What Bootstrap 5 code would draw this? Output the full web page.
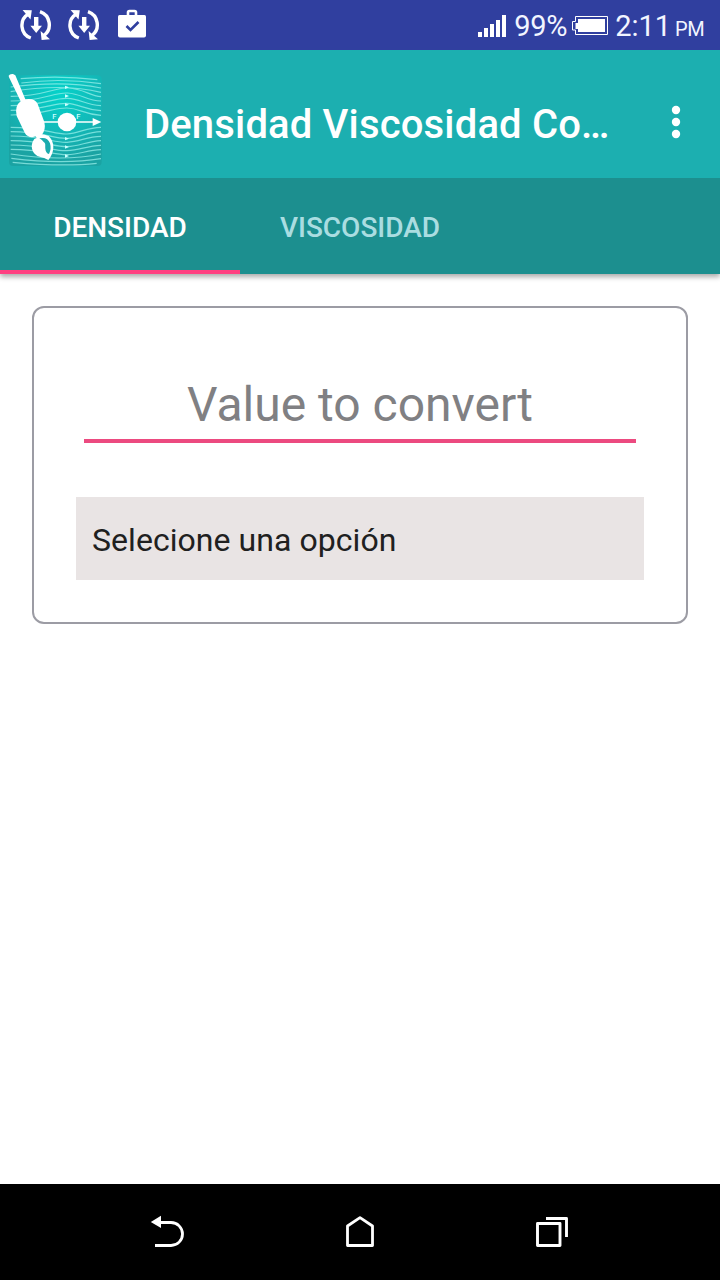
<!DOCTYPE html>
<html lang="es">
<head>
<meta charset="utf-8">
<meta name="viewport" content="width=device-width, initial-scale=1">
<title>Densidad Viscosidad Converter</title>
<link href="https://cdn.jsdelivr.net/npm/bootstrap@5.3.0/dist/css/bootstrap.min.css" rel="stylesheet">
<style>
body{font-family:Roboto,"Liberation Sans",sans-serif;height:1280px;background:#fff;overflow:hidden}
svg{display:block;flex:none}
.statusbar{height:50px;background:#303f9f;padding:0 16px 0 20px;font-size:29px;line-height:50px;color:#f2f5ff}
.status-text{height:50px;padding-top:1px;white-space:nowrap}
.meridiem{font-size:20px;letter-spacing:-.6px;margin-left:4px}
.toolbar{height:128px;background:#1cafb0;position:relative;z-index:1}
.app-title{font-size:40px;line-height:48px;font-weight:500;white-space:nowrap;margin:51px 0 0 32px;letter-spacing:.16px}
.tabs{height:96px;background:#1c8f8f;box-shadow:0 3px 5px rgba(0,0,0,.33);position:relative}
.tabs .nav-link{width:240px;height:96px;border-radius:0;border-bottom:4px solid transparent;padding:3px 0 0;font-size:28px;line-height:94px;font-weight:500;color:#aadde1;text-align:center}
.tabs .nav-link.active{color:#fff;border-color:#ff4081}
.converter{margin:32px 32px 0;height:318px;border:2px solid #9c9ca4;border-radius:12px;padding:62px 42px 0}
.value-input{display:block;width:552px;height:73px;margin:0 8px;border:0;border-bottom:4px solid #ec4a80;border-radius:0;padding:0;background:transparent;text-align:center;font-size:48px;line-height:64px}
.value-input::placeholder{color:#808083;opacity:1}
.unit-select{height:83px;margin-top:54px;background:#e9e4e4;padding:3px 16px 0;font-size:32px;line-height:80px;color:#202020;border:0;letter-spacing:.05px}
.navbuttons{height:96px;background:#000}
</style>
</head>
<body class="d-flex flex-column m-0">
<div class="statusbar d-flex align-items-center flex-shrink-0">
  <svg width="32" height="36" viewBox="0 0 32 36"><g id="sync"><path d="M8.500 7A13.300 13.300 0 0 0 10.800 31M20 4.600A13.800 13.800 0 0 1 24 28.500" fill="none" stroke="#fff" stroke-width="3.400"/><path d="M2.600 3 11.800 3.200 10.500 12.500ZM20.600 24 21.600 33 30 32.300ZM14 10h4.400V18.700h3.600L16.200 26 10.400 18.700H14Z" fill="#fff"/></g></svg>
  <svg width="32" height="36" viewBox="0 0 32 36" style="margin-left:16px"><use href="#sync"/></svg>
  <svg width="30" height="32" viewBox="0 0 30 32" style="margin:-2px 0 0 17px"><path d="M11 8V4.500q0-1.500 1.500-1.500h5q1.500 0 1.500 1.500V8" fill="none" stroke="#fff" stroke-width="2.600"/><path d="M2.500 7h25q1.500 0 1.500 1.500v19q0 2-2 2H3q-2 0-2-2v-19Q1 7 2.500 7Z" fill="#fff"/><path d="m9.500 18 4 4 8-8" fill="none" stroke="#303f9f" stroke-width="2.600"/></svg>
  <svg class="ms-auto" width="29" height="24" viewBox="0 0 29 24"><path d="M0 19h4v5H0zM6 15h4v9H6zM12 11h4v13h-4zM18 7h4v17h-4zM24 2h4v22h-4z" fill="#fff"/></svg>
  <span class="status-text" style="margin-left:7px;letter-spacing:-.3px">99%</span>
  <svg width="36" height="20" viewBox="0 0 36 20" style="margin:2px 0 0 5px"><path d="M3.500.5h32v18h-32V14H.5V5.500h3Z" fill="none" stroke="#fff"/><path d="M6 3h27v13H6v-3H3.500V7H6Z" fill="#fff"/></svg>
  <span class="status-text" style="margin-left:7px">2:11<span class="meridiem">PM</span></span>
</div>
<header class="toolbar d-flex flex-shrink-0">
  <svg width="112" height="112" viewBox="0 0 336 336" style="margin-top:14px">
    <defs><radialGradient id="flow" cx=".55" cy=".2" r=".75"><stop offset="0" stop-color="#05d3ca"/><stop offset=".55" stop-color="#12bab9"/><stop offset="1" stop-color="#1aa3a3"/></radialGradient></defs>
    <rect x="27" y="34" width="278" height="272" rx="12" fill="url(#flow)"/>
    <g fill="none" stroke="#9bf1eb" stroke-width="3.500" opacity=".72">
      <path d="M62 44Q180 33 292 47M64 57Q180 41 303 59M32 69Q190 49 303 72M32 83Q190 57 303 85M32 97C130 98 160 70 205 72S270 96 303 98M32 111C130 111 160 85 202 87S260 110 303 111M32 125C130 125 160 101 202 103S255 123 303 125M32 139C130 139 162 116 201 118S252 137 303 140M32 153C130 153 160 131 201 132S248 151 303 154M32 190C130 190 165 212 201 210S260 190 303 190M32 203C130 203 162 225 201 223S260 204 303 203M32 216C130 216 162 237 201 235S260 218 303 217M32 230C130 230 162 249 201 248S260 232 303 230M32 243C130 243 162 262 201 260S260 246 303 244M32 256C130 256 162 273 201 272S260 259 303 257M32 270Q190 294 303 270M34 283Q190 302 303 284M38 295Q190 309 290 298"/>
    </g>
    <path d="M195 65l12 5-12 5ZM195 91l12 5-12 5ZM195 117l12 5-12 5ZM195 219l12 5-12 5ZM195 244l12 5-12 5ZM195 271l12 5-12 5Z" fill="#caffff"/>
    <path d="M125 174H285" stroke="#fff" stroke-width="5"/><path d="m278 162 26 12-26 12Z" fill="#fff"/>
    <circle cx="201" cy="174" r="28" fill="#fff"/>
    <g fill="#caffff" font-family="Roboto,sans-serif" font-size="23" font-weight="500"><text x="157" y="166">F</text><text x="229" y="166">F</text></g>
    <path d="M26 35Q29 29 39 30L46 34 76 106Q104 101 113 120L133 174Q138 196 126 212L96 220Q82 219 75 208L50 156Q43 126 62 112L27 40Z" fill="#fff"/>
    <path d="M105 214Q124 206 146 216 161 232 160 250 159 272 145 288 133 280 119 278C100 273 90 252 98 233Q102 223 110 222Z" fill="#fff"/>
    <path d="M118 223Q142 217 150 238 155 254 147 270 137 267 136 254C135 242 138 239 131 234Q127 228 118 223Z" fill="#1aabae"/>
  </svg>
  <h1 class="app-title text-white">Densidad Viscosidad Co…</h1>
  <svg class="ms-auto" width="10" height="36" viewBox="0 0 10 36" style="margin-top:54px;margin-right:39px"><g fill="#fff"><circle cx="5" cy="6" r="4.200"/><circle cx="5" cy="18" r="4.200"/><circle cx="5" cy="30" r="4.200"/></g></svg>
</header>
<nav class="tabs nav nav-pills flex-nowrap flex-shrink-0">
  <a class="nav-link active bg-transparent" href="#">DENSIDAD</a>
  <a class="nav-link" href="#">VISCOSIDAD</a>
</nav>
<main class="flex-grow-1">
  <section class="converter">
    <input class="value-input" type="text" placeholder="Value to convert" aria-label="Value to convert">
    <div class="unit-select" role="button">Selecione una opción</div>
  </section>
</main>
<footer class="navbuttons d-flex flex-shrink-0">
  <svg width="36" height="36" viewBox="0 0 36 36" style="margin:30px 0 0 150px"><path d="M9 8.500h12a11.500 11.500 0 0 1 0 23H5" fill="none" stroke="#fff" stroke-width="2.800"/><path d="M.8 8 11 1.800V14Z" fill="#fff"/></svg>
  <svg width="30" height="34" viewBox="0 0 30 34" style="margin:31px 0 0 159px"><path d="M2.500 30.500V11L15 2.700 27.500 11v19.500Z" fill="none" stroke="#fff" stroke-width="2.800" stroke-linejoin="round"/></svg>
  <svg width="34" height="34" viewBox="0 0 34 34" style="margin:32px 0 0 160px"><path d="M2.500 7.500h22.500v22h-22.500ZM11 2.500h20.500v18.500" fill="none" stroke="#fff" stroke-width="2.900" stroke-linejoin="round"/></svg>
</footer>
<script src="https://cdn.jsdelivr.net/npm/bootstrap@5.3.0/dist/js/bootstrap.bundle.min.js"></script>
</body>
</html>
